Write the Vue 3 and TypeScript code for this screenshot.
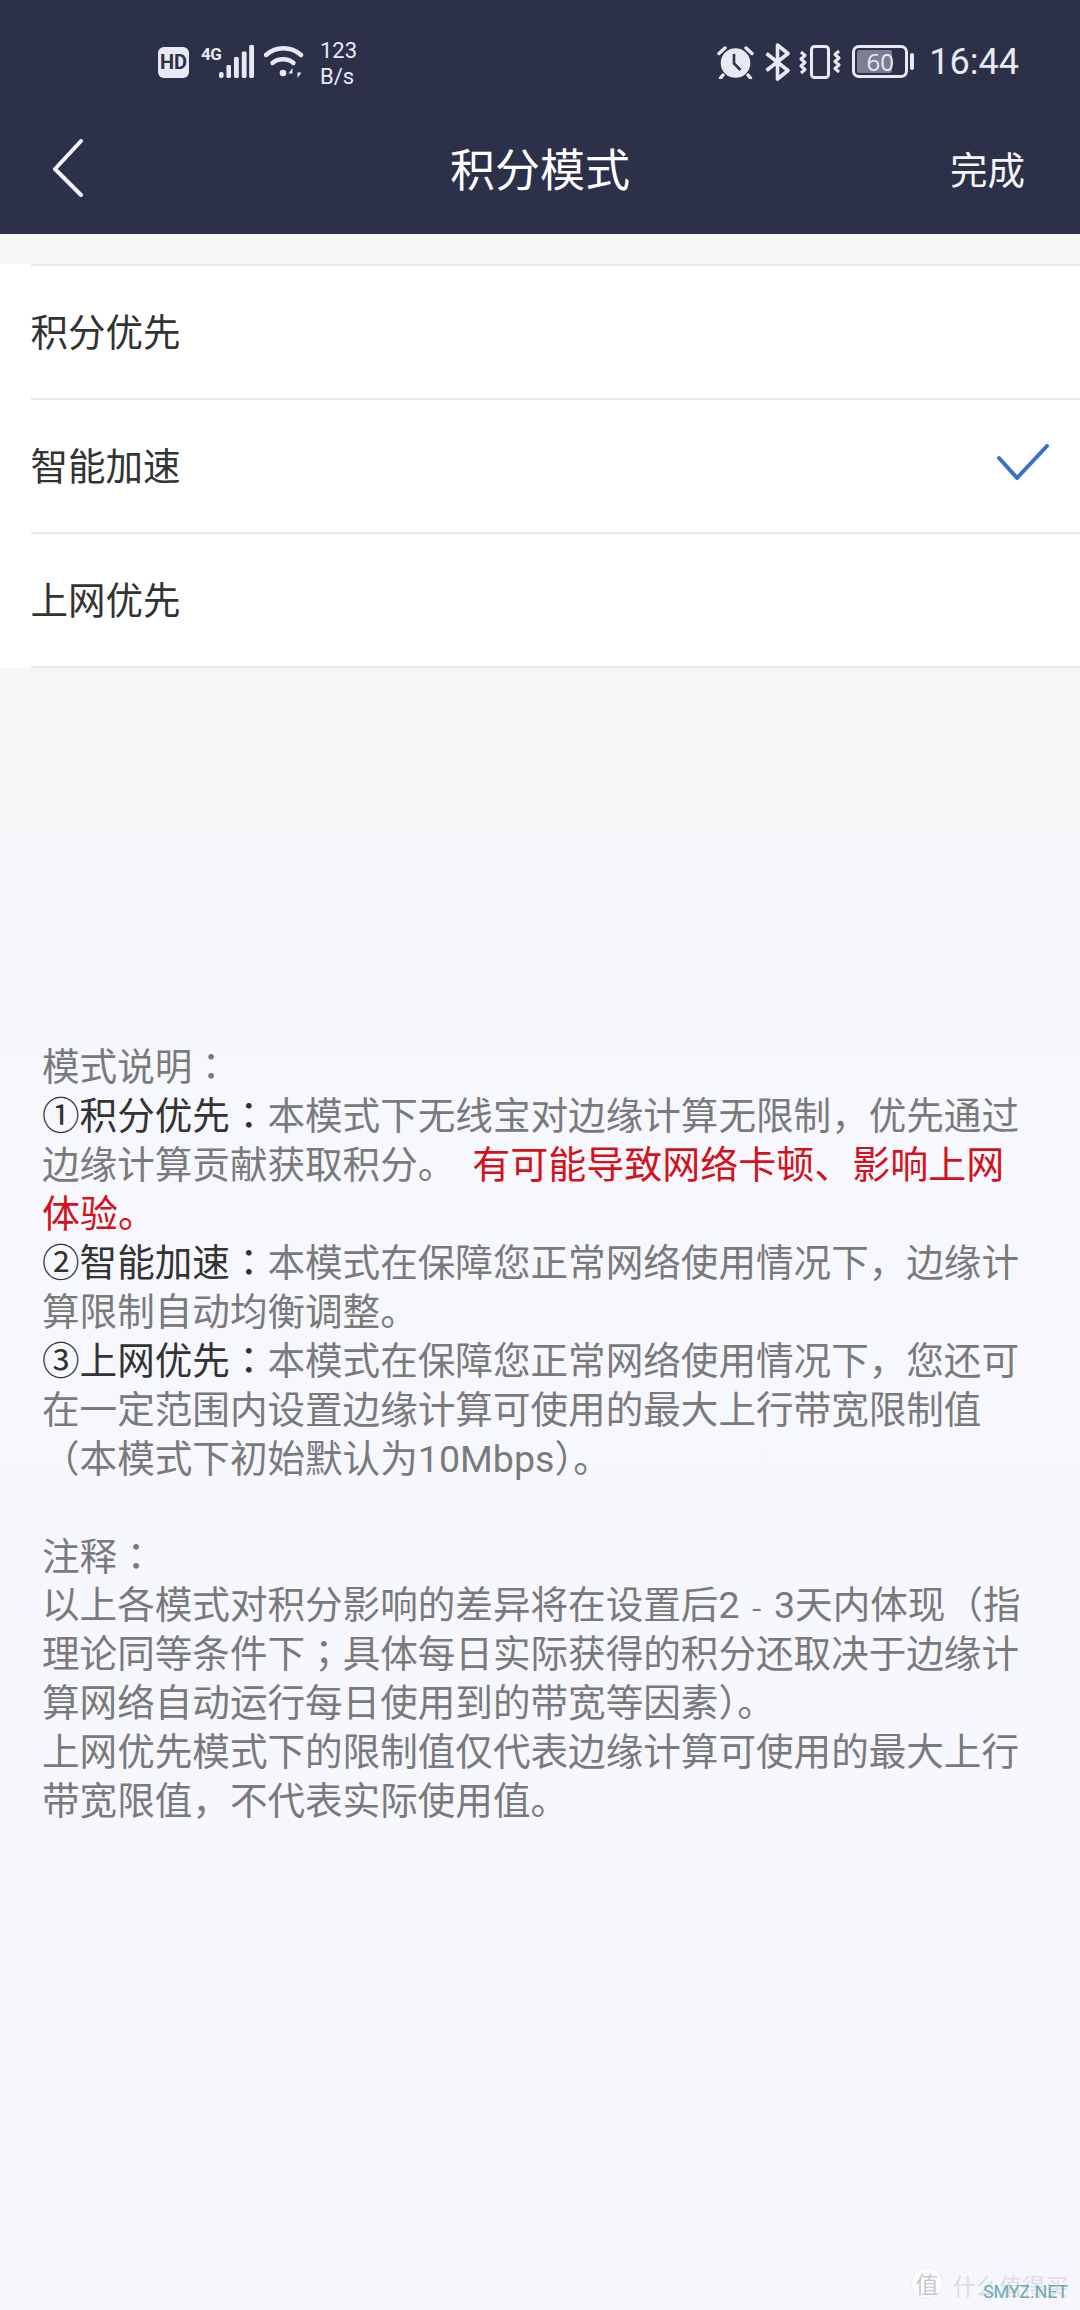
<script setup lang="ts">
interface Seg { t: string; c?: string }
type Line = Seg[]

const rows = [
  { label: '积分优先', on: false },
  { label: '智能加速', on: true },
  { label: '上网优先', on: false },
]

const lines: Line[] = [
  [{ t: '模式说明' }, { t: '：', c: 'mid' }],
  [{ t: '①积分优先', c: 'lead' }, { t: '：', c: 'lead mid' }, { t: '本模式下无线宝对边缘计算无限制，优先通过' }],
  [{ t: '边缘计算贡献获取积分。' }, { t: '有可能导致网络卡顿、影响上网', c: 'red gap' }],
  [{ t: '体验。', c: 'red' }],
  [{ t: '②智能加速', c: 'lead' }, { t: '：', c: 'lead mid' }, { t: '本模式在保障您正常网络使用情况下，边缘计' }],
  [{ t: '算限制自动均衡调整。' }],
  [{ t: '③上网优先', c: 'lead' }, { t: '：', c: 'lead mid' }, { t: '本模式在保障您正常网络使用情况下，您还可' }],
  [{ t: '在一定范围内设置边缘计算可使用的最大上行带宽限制值' }],
  [{ t: '（本模式下初始默认为' }, { t: '10Mbps', c: 'lat' }, { t: '）。' }],
  [{ t: '\u00a0' }],
  [{ t: '注释' }, { t: '：', c: 'mid' }],
  [{ t: '以上各模式对积分影响的差异将在设置后' }, { t: '2', c: 'lat' }, { t: '-', c: 'dash' }, { t: '3', c: 'lat' }, { t: '天内体现（指' }],
  [{ t: '理论同等条件下' }, { t: '；', c: 'mid' }, { t: '具体每日实际获得的积分还取决于边缘计' }],
  [{ t: '算网络自动运行每日使用到的带宽等因素）。' }],
  [{ t: '上网优先模式下的限制值仅代表边缘计算可使用的最大上行' }],
  [{ t: '带宽限值，不代表实际使用值。' }],
]
</script>

<template>
  <div class="page">
    <header class="head">
      <div class="status">
        <div class="status-left">
          <span class="hd">HD</span>
          <span class="net">4G</span>
          <svg class="signal" width="36" height="33" viewBox="0 0 36 33" fill="#e8eaf3">
            <rect x="0" y="27" width="4.6" height="6" rx="2" />
            <rect x="7.4" y="20" width="4.6" height="13" rx="1.4" />
            <rect x="15" y="12" width="4.8" height="21" rx="1.4" />
            <rect x="22.8" y="6.5" width="4.8" height="26.5" rx="1.4" />
            <rect x="30.2" y="0" width="4.8" height="33" rx="1.4" />
          </svg>
          <svg class="wifi" width="40" height="34" viewBox="0 0 40 34" fill="none" stroke="#e8eaf3" stroke-width="4.4" stroke-linecap="round">
            <path d="M2 10C12 1 27 1 37 10" />
            <path d="M8.500 18C14 13 24 13 29.500 18" />
            <circle cx="19" cy="28" r="3.300" fill="#e8eaf3" stroke="none" />
            <path d="M28.500 23L24.500 28.500H28.500V33ZM33.500 33L37.500 27.500H33.500V23Z" fill="#e8eaf3" stroke="none" />
          </svg>
          <div class="speed"><span>123</span><span>B/s</span></div>
        </div>
        <div class="status-right">
          <svg width="37" height="34" viewBox="0 0 37 34" fill="none">
            <circle cx="18.500" cy="18" r="14.800" fill="#e8eaf3" />
            <path d="M17 9V18.500L23.500 25" stroke="#2d3049" stroke-width="2.600" />
            <path d="M2 8.500L8 3M35 8.500L29 3M6 30L3.500 33M31 30L33.500 33" stroke="#e8eaf3" stroke-width="3.400" stroke-linecap="round" />
          </svg>
          <svg class="bt" width="27" height="38" viewBox="0 0 27 38" fill="none" stroke="#e8eaf3" stroke-width="3.600" stroke-linejoin="round">
            <path d="M2.500 10.500L24 27.500L13.500 36V2L24 10.500L2.500 27.500" />
          </svg>
          <svg class="vib" width="42" height="34" viewBox="0 0 42 34" fill="none" stroke="#e8eaf3" stroke-linejoin="round">
            <rect x="12.500" y="1.500" width="17" height="31" rx="3" stroke-width="3" />
            <path d="M2 7L6 10.500L2 14L6 17.500L2 21L6 24.500L2 28" stroke-width="3" />
            <path d="M40 6L36 9.500L40 13L36 16.500L40 20L36 23.500L40 27" stroke-width="3" />
          </svg>
          <div class="batt-wrap">
            <div class="batt"><i class="batt-fill"></i><span>60</span></div>
            <i class="batt-nub"></i>
          </div>
          <span class="clock">16:44</span>
        </div>
      </div>
      <nav class="nav">
        <svg class="back" width="32" height="58" viewBox="0 0 32 58" fill="none" stroke="#f4f5f8" stroke-width="4" stroke-linecap="round" stroke-linejoin="round">
          <path d="M29 2L3 30L29 56" />
        </svg>
        <h1 class="title">积分模式</h1>
        <span class="done">完成</span>
      </nav>
    </header>

    <ul class="list">
      <li v-for="r in rows" :key="r.label" class="row">
        <span>{{ r.label }}</span>
        <svg v-if="r.on" class="check" width="52" height="36" viewBox="0 0 52 36" fill="none" stroke="#3a6fd0" stroke-width="4" stroke-linecap="round" stroke-linejoin="round">
          <path d="M2 14L20 34L50 2" />
        </svg>
      </li>
    </ul>

    <section class="desc">
      <p v-for="(line, i) in lines" :key="i" class="line">
        <span v-for="(seg, j) in line" :key="j" :class="seg.c">{{ seg.t }}</span>
      </p>
    </section>

    <div class="mark">
      <span class="mark-badge">值</span>
      <span class="mark-name">什么值得买</span>
      <span class="mark-site">SMYZ.NET</span>
    </div>
  </div>
</template>

<style scoped>
.page {
  position: relative;
  width: 1080px;
  height: 2310px;
  overflow: hidden;
  background: linear-gradient(#f5f6f8 0, #f5f6f8 800px, #f7f8fd 1100px, #f6f7fc 100%);
  font-family: "Noto Sans CJK SC", "Noto Sans", sans-serif;
}
.head {
  background: #2d3049;
  color: #f4f5f8;
}
.status {
  height: 100px;
  box-sizing: border-box;
  padding: 45px 61px 0 158px;
  display: flex;
  justify-content: space-between;
  align-items: flex-start;
}
.status-left,
.status-right {
  display: flex;
  align-items: flex-start;
}
.hd {
  width: 31px;
  height: 31px;
  border-radius: 6px;
  background: #e8eaf3;
  color: #2d3049;
  font: 700 20px/31px Roboto, sans-serif;
  text-align: center;
  margin-top: 2px;
  margin-right: 12px;
}
.net {
  width: 18px;
  font: 700 17px/16px Roboto, sans-serif;
  letter-spacing: -0.5px;
  color: #e8eaf3;
  margin-top: 1px;
}
.wifi {
  margin-left: 9px;
}
.speed {
  margin-left: 16px;
  margin-top: -7px;
  display: flex;
  flex-direction: column;
  font: 400 22px/26px Roboto, sans-serif;
  color: #e8eaf3;
}
.bt {
  margin-left: 10px;
  margin-top: -2px;
}
.vib {
  margin-left: 8px;
}
.batt-wrap {
  display: flex;
  align-items: center;
  margin-left: 11px;
  height: 33px;
}
.batt {
  position: relative;
  box-sizing: border-box;
  width: 56px;
  height: 33px;
  border: 3px solid #e8eaf3;
  border-radius: 7px;
  display: flex;
  align-items: center;
  justify-content: center;
  font: 400 24px/1 "Open Sans", sans-serif;
  color: #e8eaf3;
}
.batt span {
  position: relative;
}
.batt-fill {
  position: absolute;
  left: 2px;
  top: 2px;
  bottom: 2px;
  width: 35px;
  background: #7b7f92;
  border-radius: 2px;
}
.batt-nub {
  width: 4px;
  height: 17px;
  margin-left: 2px;
  border-radius: 2px;
  background: #e8eaf3;
}
.clock {
  margin-left: 15px;
  margin-top: 1px;
  font: 400 36px/33px Roboto, sans-serif;
  color: #e8eaf3;
}
.nav {
  height: 134px;
  box-sizing: border-box;
  padding: 2px 55px 0;
  display: grid;
  grid-template-columns: 1fr auto 1fr;
  align-items: center;
}
.back {
  margin-left: -3px;
}
.title {
  margin: 0;
  font-size: 45px;
  font-weight: 400;
  line-height: 60px;
  color: #fff;
}
.done {
  justify-self: end;
  font-size: 37.500px;
  line-height: 50px;
}
.list {
  list-style: none;
  margin: 30px 0 0;
  padding: 0 0 2px;
  background: #fff;
}
.row {
  position: relative;
  box-sizing: border-box;
  height: 134px;
  padding: 0 31px 4px 30.500px;
  display: flex;
  align-items: center;
  justify-content: space-between;
  font-size: 37.500px;
  color: #333;
}
.row::before {
  content: "";
  position: absolute;
  left: 31px;
  right: 0;
  top: 0;
  height: 2px;
  background: #eaeaea;
}
.row:last-child::after {
  content: "";
  position: absolute;
  left: 31px;
  right: 0;
  bottom: -2px;
  height: 2px;
  background: #eaeaea;
}
.check {
  margin-top: -2px;
}
.desc {
  margin-top: 372px;
  padding: 0 42px;
  color: #7a7a7c;
  font-size: 37.600px;
  line-height: 48.950px;
}
.line {
  margin: 0;
  white-space: nowrap;
}
.lead {
  color: #333;
}
.mid {
  font-family: "Noto Sans CJK TC", sans-serif;
  line-height: 0;
}
.lat {
  font-family: Roboto, sans-serif;
  line-height: 0;
}
.red {
  color: #d3121c;
  font-size: 38px;
  line-height: 0;
}
.gap {
  margin-left: 17px;
}
.dash {
  margin: 0 12px;
  font-size: 30px;
  line-height: 0;
}
.mark {
  position: absolute;
  left: 912px;
  top: 2268px;
  width: 160px;
  height: 32px;
  color: #dcdde3;
}
.mark-badge {
  position: absolute;
  left: 0;
  top: 0;
  width: 30px;
  height: 30px;
  border-radius: 50%;
  background: #fdfdfe;
  box-shadow: 0 0 0 1px #eeeef2;
  color: #c8c9cf;
  font-size: 23px;
  line-height: 30px;
  text-align: center;
}
.mark-name {
  position: absolute;
  left: 41px;
  top: 4px;
  font-size: 23px;
  line-height: 26px;
  white-space: nowrap;
}
.mark-site {
  position: absolute;
  left: 71px;
  top: 15px;
  font: 400 18px/18px Roboto, sans-serif;
  letter-spacing: -0.2px;
  color: #6fa9b4;
  white-space: nowrap;
}
</style>
